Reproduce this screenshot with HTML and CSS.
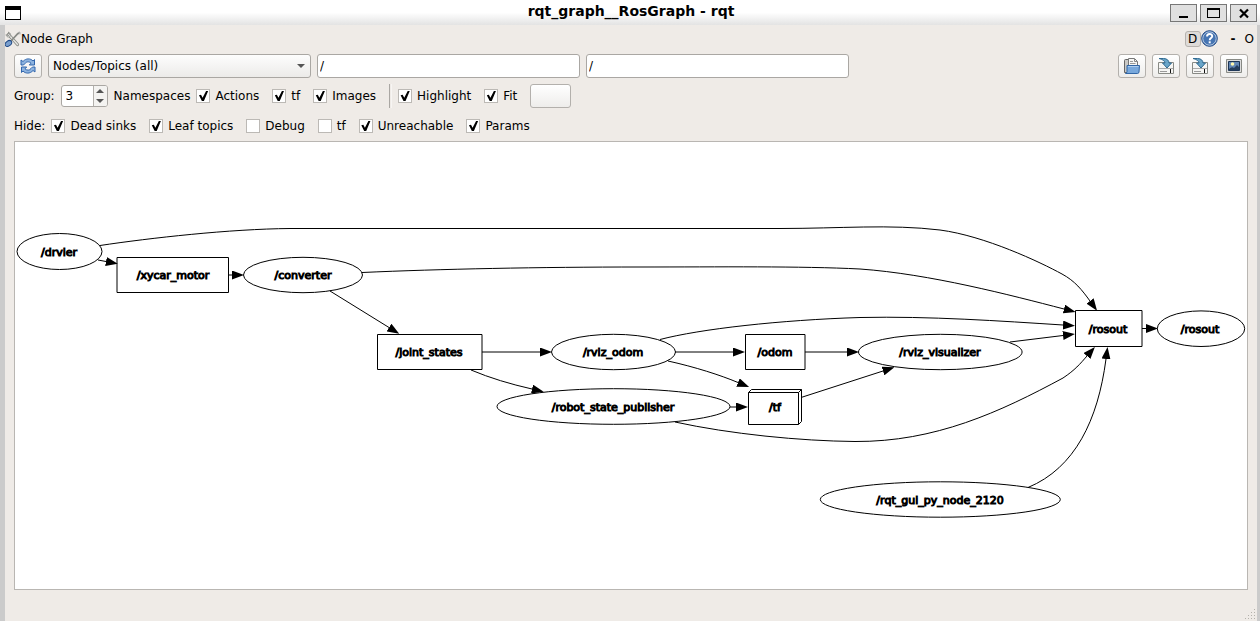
FILE: index.html
```html
<!DOCTYPE html>
<html lang="en">
<head>
<meta charset="utf-8">
<title>rqt_graph__RosGraph - rqt</title>
<link rel="stylesheet" href="styles.css">
</head>
<body>
<header class="titlebar">
  <svg class="window-icon" width="16" height="14" viewBox="0 0 16 14"><path d="M0 0h16v14H0z" fill="#000"/><path d="M1 4h14v9H1z" fill="#fff"/></svg>
  <h1 class="window-title">rqt_graph__RosGraph - rqt</h1>
  <div class="window-buttons">
    <button class="window-button" aria-label="Minimize"><svg width="25" height="16" viewBox="0 0 25 16"><path d="M8 11h9v2H8z"/></svg></button>
    <button class="window-button" aria-label="Maximize"><svg width="25" height="16" viewBox="0 0 25 16"><path fill-rule="evenodd" d="M6 3h13v10H6zM7 5v7h11V5z"/></svg></button>
    <button class="window-button" aria-label="Close"><svg width="25" height="16" viewBox="0 0 25 16"><path d="M9 4.500l8 8M17 4.500l-8 8" stroke="#000" stroke-width="2.200"/></svg></button>
  </div>
</header>
<main class="dock">
  <div class="dock-header">
    <svg width="16" height="16" viewBox="0 0 16 16">
      <path d="M3.500 3.500 12.500 13.500" stroke="#888a85" stroke-width="3.200" stroke-linecap="round"/>
      <path d="M3.500 3.500 12.500 13.500" stroke="#e6e6e3" stroke-width="1.400" stroke-linecap="round"/>
      <path d="M3 1.200 4.500 2.500 4.200 4.200 2.600 4.800 1 3.500C1 5.500 3 6.500 4.800 5.700 6.200 4.500 5.800 1.500 3 1.200z" fill="#eee" stroke="#888a85" stroke-width=".8"/>
      <path d="M6 10 12.500 3 14.800 1.200" stroke="#888a85" stroke-width="1.700" fill="none"/>
      <path d="M13 1.500h2v2" stroke="#aaa" fill="none"/>
      <ellipse cx="3.400" cy="12.500" rx="3.600" ry="2.500" transform="rotate(-38 3.400 12.500)" fill="#7a9fce" stroke="#204a87"/>
    </svg>
    <h2 class="dock-title">Node Graph</h2>
    <button class="dock-detach">D</button>
    <button class="plain-button help" aria-label="Help"><svg width="17" height="17" viewBox="0 0 17 17"><circle cx="8.500" cy="8.500" r="7.800" fill="#3465a4" stroke="#204a87"/><circle cx="8.500" cy="8.500" r="6.700" fill="#4675b3" stroke="#b7c9e2"/><path d="M6 6.500c0-3.300 5.200-3.200 5.200-.3 0 1.900-2.500 1.900-2.500 4" fill="none" stroke="#fff" stroke-width="1.900"/><path d="M7.700 11.300h2v2h-2z" fill="#fff"/></svg></button>
    <button class="plain-button dash">-</button>
    <button class="plain-button">O</button>
  </div>
  <div class="row toolbar">
    <button class="tool" aria-label="Refresh"><svg width="16" height="16" viewBox="0 0 16 16">
      <path d="M1 7V2l2 1.500C6 0 10.500.2 13 3l1.500-1.500V7H9.300l1.700-1.800C9 3.300 6.500 3.400 5 5.500L3.500 7z" fill="#8db3df" stroke="#3166ad" stroke-linejoin="round"/>
      <path d="M15 9v5l-2-1.500C10 16 5.500 15.800 3 13l-1.500 1.500V9h5.200L5 10.800c2 1.900 4.500 1.800 6-.3L12.500 9z" fill="#8db3df" stroke="#3166ad" stroke-linejoin="round"/></svg></button>
    <div class="combo"><select class="field combo-select" aria-label="Graph type"><option>Nodes/Topics (all)</option></select></div>
    <input class="field filter" type="text" value="/" aria-label="Node filter">
    <input class="field filter" type="text" value="/" aria-label="Topic filter">
    <div class="file-tools">
      <button class="tool" aria-label="Load dot graph"><svg width="16" height="16" viewBox="0 0 16 16"><path d="M.5 14.500V2.500q0-1 1-1h3v13z" fill="#c9c9c6" stroke="#666"/><path d="M4.500.500h6l3 3V10h-9z" fill="#f6f6f4" stroke="#777"/><path d="M10.500.500v3h3" fill="none" stroke="#888"/><path d="M6 3.500h3M6 5.500h5.500" stroke="#999"/><path d="M3 7.500h12.500L15 14q-.2 1.500-1.500 1.500H1.500q1.500-.5 1.500-2z" fill="#78a8dc" stroke="#3166a5"/><path d="M4 8.500h10.500" stroke="#abcbee"/></svg></button>
      <button class="tool" aria-label="Save as dot graph"><svg width="16" height="16" viewBox="0 0 16 16"><path d="M.5 4.500h15v11H.5z" fill="#f6f6f4" stroke="#888a85"/><path d="M1 10.500h14" stroke="#aaa"/><path d="M2 13.500h7" stroke="#999"/><path d="M12.500 11v4" stroke="#111"/><path d="M1 .5h4.500C9 .5 11 2.500 11 5h2.500L9 10 4.500 5H7C7 3 4.500 1.500 1 .5z" fill="#6aa5c8" stroke="#316b92"/></svg></button>
      <button class="tool" aria-label="Save as SVG"><svg width="16" height="16" viewBox="0 0 16 16"><path d="M.5 4.500h15v11H.5z" fill="#f6f6f4" stroke="#888a85"/><path d="M1 10.500h14" stroke="#aaa"/><path d="M2 13.500h7" stroke="#999"/><path d="M12.500 11v4" stroke="#111"/><path d="M1 .5h4.500C9 .5 11 2.500 11 5h2.500L9 10 4.500 5H7C7 3 4.500 1.500 1 .5z" fill="#6aa5c8" stroke="#316b92"/></svg></button>
      <button class="tool" aria-label="Save as image"><svg width="16" height="14" viewBox="0 0 16 14"><path d="M.5.5h15v13H.5z" fill="#ddd" stroke="#888a85"/><path d="M2.500 2.500h11v9h-11z" fill="#6286b4" stroke="#1c3455"/><path d="M3 10q3-3 5-1l3-3 2 2v3.500H3z" fill="#253d5c"/><circle cx="6.500" cy="5" r="1.800" fill="#fff7ae"/></svg></button>
    </div>
  </div>
  <div class="row group-row">
    <label for="group">Group:</label>
    <div class="spin"><input id="group" class="spin-input" type="text" value="3"><div class="spin-buttons"><button class="spin-button up" aria-label="Increase"></button><button class="spin-button down" aria-label="Decrease"></button></div></div>
    <span>Namespaces</span>
    <label class="check"><input type="checkbox" checked>Actions</label>
    <label class="check"><input type="checkbox" checked>tf</label>
    <label class="check"><input type="checkbox" checked>Images</label>
    <span class="separator"></span>
    <label class="check"><input type="checkbox" checked>Highlight</label>
    <label class="check"><input type="checkbox" checked>Fit</label>
    <button class="tool fit" aria-label="Fit in view"></button>
  </div>
  <div class="row hide-row">
    <span>Hide:</span>
    <label class="check"><input type="checkbox" checked>Dead sinks</label>
    <label class="check"><input type="checkbox" checked>Leaf topics</label>
    <label class="check"><input type="checkbox">Debug</label>
    <label class="check"><input type="checkbox">tf</label>
    <label class="check"><input type="checkbox" checked>Unreachable</label>
    <label class="check"><input type="checkbox" checked>Params</label>
  </div>
  <div class="canvas">
    <svg class="graph" viewBox="15 142 1232 447">
      <defs><marker id="arrow" viewBox="0 0 12 9" refX="0" refY="4.500" markerWidth="12" markerHeight="9" markerUnits="userSpaceOnUse" orient="auto"><path d="M0 0 12 4.500 0 9z"/></marker></defs>
      <g class="edges">
        <path d="M98 260 106 261.500"/>
        <path d="M229 275H232"/>
        <path d="M100 245.500C150 238 230 229 290 228.500H780C840 228.500 890 224 940 230C985 236 1040 262 1062 274C1075 281 1082 290 1090 301"/>
        <path d="M362 272.500C440 269 540 267 640 267C720 267 800 266 860 269C930 274 1010 295 1064 309"/>
        <path d="M330 291 389 327.500"/>
        <path d="M482 352H540"/>
        <path d="M471 370C490 378 510 384 532 389"/>
        <path d="M675 352H733"/>
        <path d="M805 352H847"/>
        <path d="M660 339.500C700 329 780 320 860 317.500C930 316 1000 321 1063 325"/>
        <path d="M1010 342 1063 335.500"/>
        <path d="M668 361C695 367 720 375 738 382.500"/>
        <path d="M730 407H736"/>
        <path d="M801 397.500 883 371"/>
        <path d="M675 422C730 434 800 441 855 441.500C935 442 1000 412 1063 378C1075 370 1080 364 1087 356"/>
        <path d="M1028 487.500C1075 468 1098 420 1106 359"/>
        <path d="M1142 328.500H1146"/>
      </g>
      <g class="nodes">
        <ellipse cx="59.500" cy="251.500" rx="42.500" ry="18"/><path d="M117 257.500H228.500V292.500H117z"/>
        <ellipse cx="303" cy="275" rx="59.500" ry="17.700"/><path d="M377.500 334.500H482V369.500H377.500z"/>
        <ellipse cx="613.500" cy="352" rx="62" ry="17.700"/><ellipse cx="613.500" cy="406.500" rx="116.500" ry="17.800"/>
        <path d="M745.500 334.500H805V369.500H745.500z"/><path d="M748.500 392.500H798.500V424.500H748.500zM748.500 392.500 751.500 389.500H801.500V421.500L798.500 424.500M798.500 392.500 801.500 389.500"/>
        <ellipse cx="940.300" cy="352" rx="81.800" ry="17.700"/><ellipse cx="940.300" cy="499.500" rx="120" ry="17.700"/>
        <path d="M1075.500 310.500H1142V346.500H1075.500z"/><ellipse cx="1201" cy="328.700" rx="43.700" ry="17.800"/>
      </g>
      <g class="names">
        <text x="59" y="256">/drvier</text><text x="173" y="279">/xycar_motor</text><text x="303" y="279">/converter</text>
        <text x="429" y="356">/joint_states</text><text x="613" y="356">/rviz_odom</text><text x="613" y="411">/robot_state_publisher</text>
        <text x="775" y="356">/odom</text><text x="775" y="411">/tf</text><text x="940" y="356">/rviz_visualizer</text>
        <text x="940" y="504">/rqt_gui_py_node_2120</text><text x="1108" y="333">/rosout</text><text x="1200" y="333">/rosout</text>
      </g>
    </svg>
  </div>
  <footer class="statusbar"><svg width="10" height="10" viewBox="0 0 10 10" fill="#b4b1ab"><path d="M9 0h1v1H9zM9 3h1v1H9zM6 3h1v1H6zM9 6h1v1H9zM6 6h1v1H6zM3 6h1v1H3zM9 9h1v1H9zM6 9h1v1H6zM3 9h1v1H3zM0 9h1v1H0z"/></svg></footer>
</main>
</body>
</html>
```
FILE: styles.css
```css
* { box-sizing: border-box; }
body {
  margin: 0;
  min-height: 100vh;
  display: flex;
  flex-direction: column;
  background: #efebe7;
  color: #000;
  font: 12px/16px "DejaVu Sans", sans-serif;
}
button, input, select { font: inherit; color: inherit; margin: 0; padding: 0; }
svg { display: block; flex: none; }

.titlebar {
  height: 25px;
  padding: 0 3px 0 5px;
  display: grid;
  grid-template-columns: 1fr auto 1fr;
  align-items: center;
  background: linear-gradient(#fff 50%, #e3e3e3);
}
.window-title { align-self: start; margin: 0; font-size: 14px; line-height: 22px; font-weight: bold; }
.window-buttons { display: flex; gap: 3px; justify-content: flex-end; }
.window-button { width: 27px; height: 18px; border: 1px solid #777; background: #e0e0e0; display: flex; }

.dock {
  flex: 1;
  display: flex;
  flex-direction: column;
  border-left: 5px solid #cbcbcb;
  border-right: 3px solid #cbcbcb;
}
.dock-header { height: 27px; display: flex; align-items: center; padding-right: 3px; }
.dock-title { margin: 0 auto 0 0; font-size: 12px; font-weight: normal; }
.dock-detach { width: 16px; height: 16px; line-height: 14px; border: 1px solid #b5b2ae; border-radius: 3px; background: #dedbd8; }
.plain-button { border: 0; background: none; }
.dash { margin: 0 9px 0 13px; font-weight: bold; }

.row { display: flex; align-items: center; gap: 6px; padding: 0 9px; height: 28px; }
.group-row { height: 32px; }
.hide-row { margin-bottom: 1px; }
.field {
  height: 24px;
  border: 1px solid #aaa7a3;
  border-radius: 3px;
  background: #fff;
}
.tool {
  width: 28px;
  height: 24px;
  display: flex;
  align-items: center;
  justify-content: center;
  border: 1px solid #b3b0ac;
  border-radius: 3px;
  background: linear-gradient(#fff, #eeedeb);
}
.combo, .filter { flex: 0 1 263px; min-width: 0; }
.combo { display: grid; align-items: center; }
.combo-select { grid-area: 1 / 1; width: 100%; padding: 0 4px; appearance: none; background: linear-gradient(#fdfdfd, #ecebe9); }
.combo::after {
  content: "";
  grid-area: 1 / 1;
  justify-self: end;
  margin-right: 6px;
  border: 4px solid transparent;
  border-top: 4px solid #555;
  border-bottom: 0;
  pointer-events: none;
}
.filter { padding: 0 2px; }
.file-tools { display: flex; gap: 6px; margin-left: auto; }

.spin { display: flex; width: 47px; height: 22px; border: 1px solid #aaa7a3; border-radius: 3px; background: #fff; overflow: hidden; }
.spin-input { width: 31px; padding-left: 4px; border: 0; background: none; }
.spin-buttons { flex: 1; display: flex; flex-direction: column; border-left: 1px solid #b3b0ac; background: #f4f3f1; }
.spin-button { flex: 1; border: 0; background: none; display: flex; align-items: center; justify-content: center; }
.spin-button::before { content: ""; border: 4px solid transparent; }
.up::before { border-bottom-color: #555; border-top: 0; }
.down::before { border-top-color: #555; border-bottom: 0; }

.check { display: flex; align-items: center; gap: 5px; padding-right: 7px; }
.check input { appearance: none; width: 14px; height: 14px; border: 1px solid #bcb9b5; background: #fff; }
.check input:checked::before {
  content: "";
  display: block;
  width: 12px;
  height: 12px;
  background: #000;
  clip-path: polygon(13% 44%, 30% 40%, 43% 64%, 72% 8%, 89% 8%, 54% 91%, 37% 91%);
}
.separator { width: 3px; height: 24px; border-left: 1px solid #aaa7a3; border-right: 1px solid #f7f5f3; }
.fit { width: 41px; }

.canvas { flex: 1; display: flex; margin: 0 9px; border: 1px solid #b9b6b2; background: #fff; min-height: 0; }
.graph { flex: 1; width: 100%; min-width: 0; }
.edges path { fill: none; stroke: #000; marker-end: url(#arrow); }
.edges path, .nodes { stroke-width: 1px; }
marker path { fill: #000; }
.nodes { fill: none; stroke: #000; }
.names { font-size: 11px; text-anchor: middle; stroke: #000; stroke-width: 1px; }

.statusbar { height: 31px; display: flex; align-items: flex-end; justify-content: flex-end; padding: 0 2px 2px 0; }
```
